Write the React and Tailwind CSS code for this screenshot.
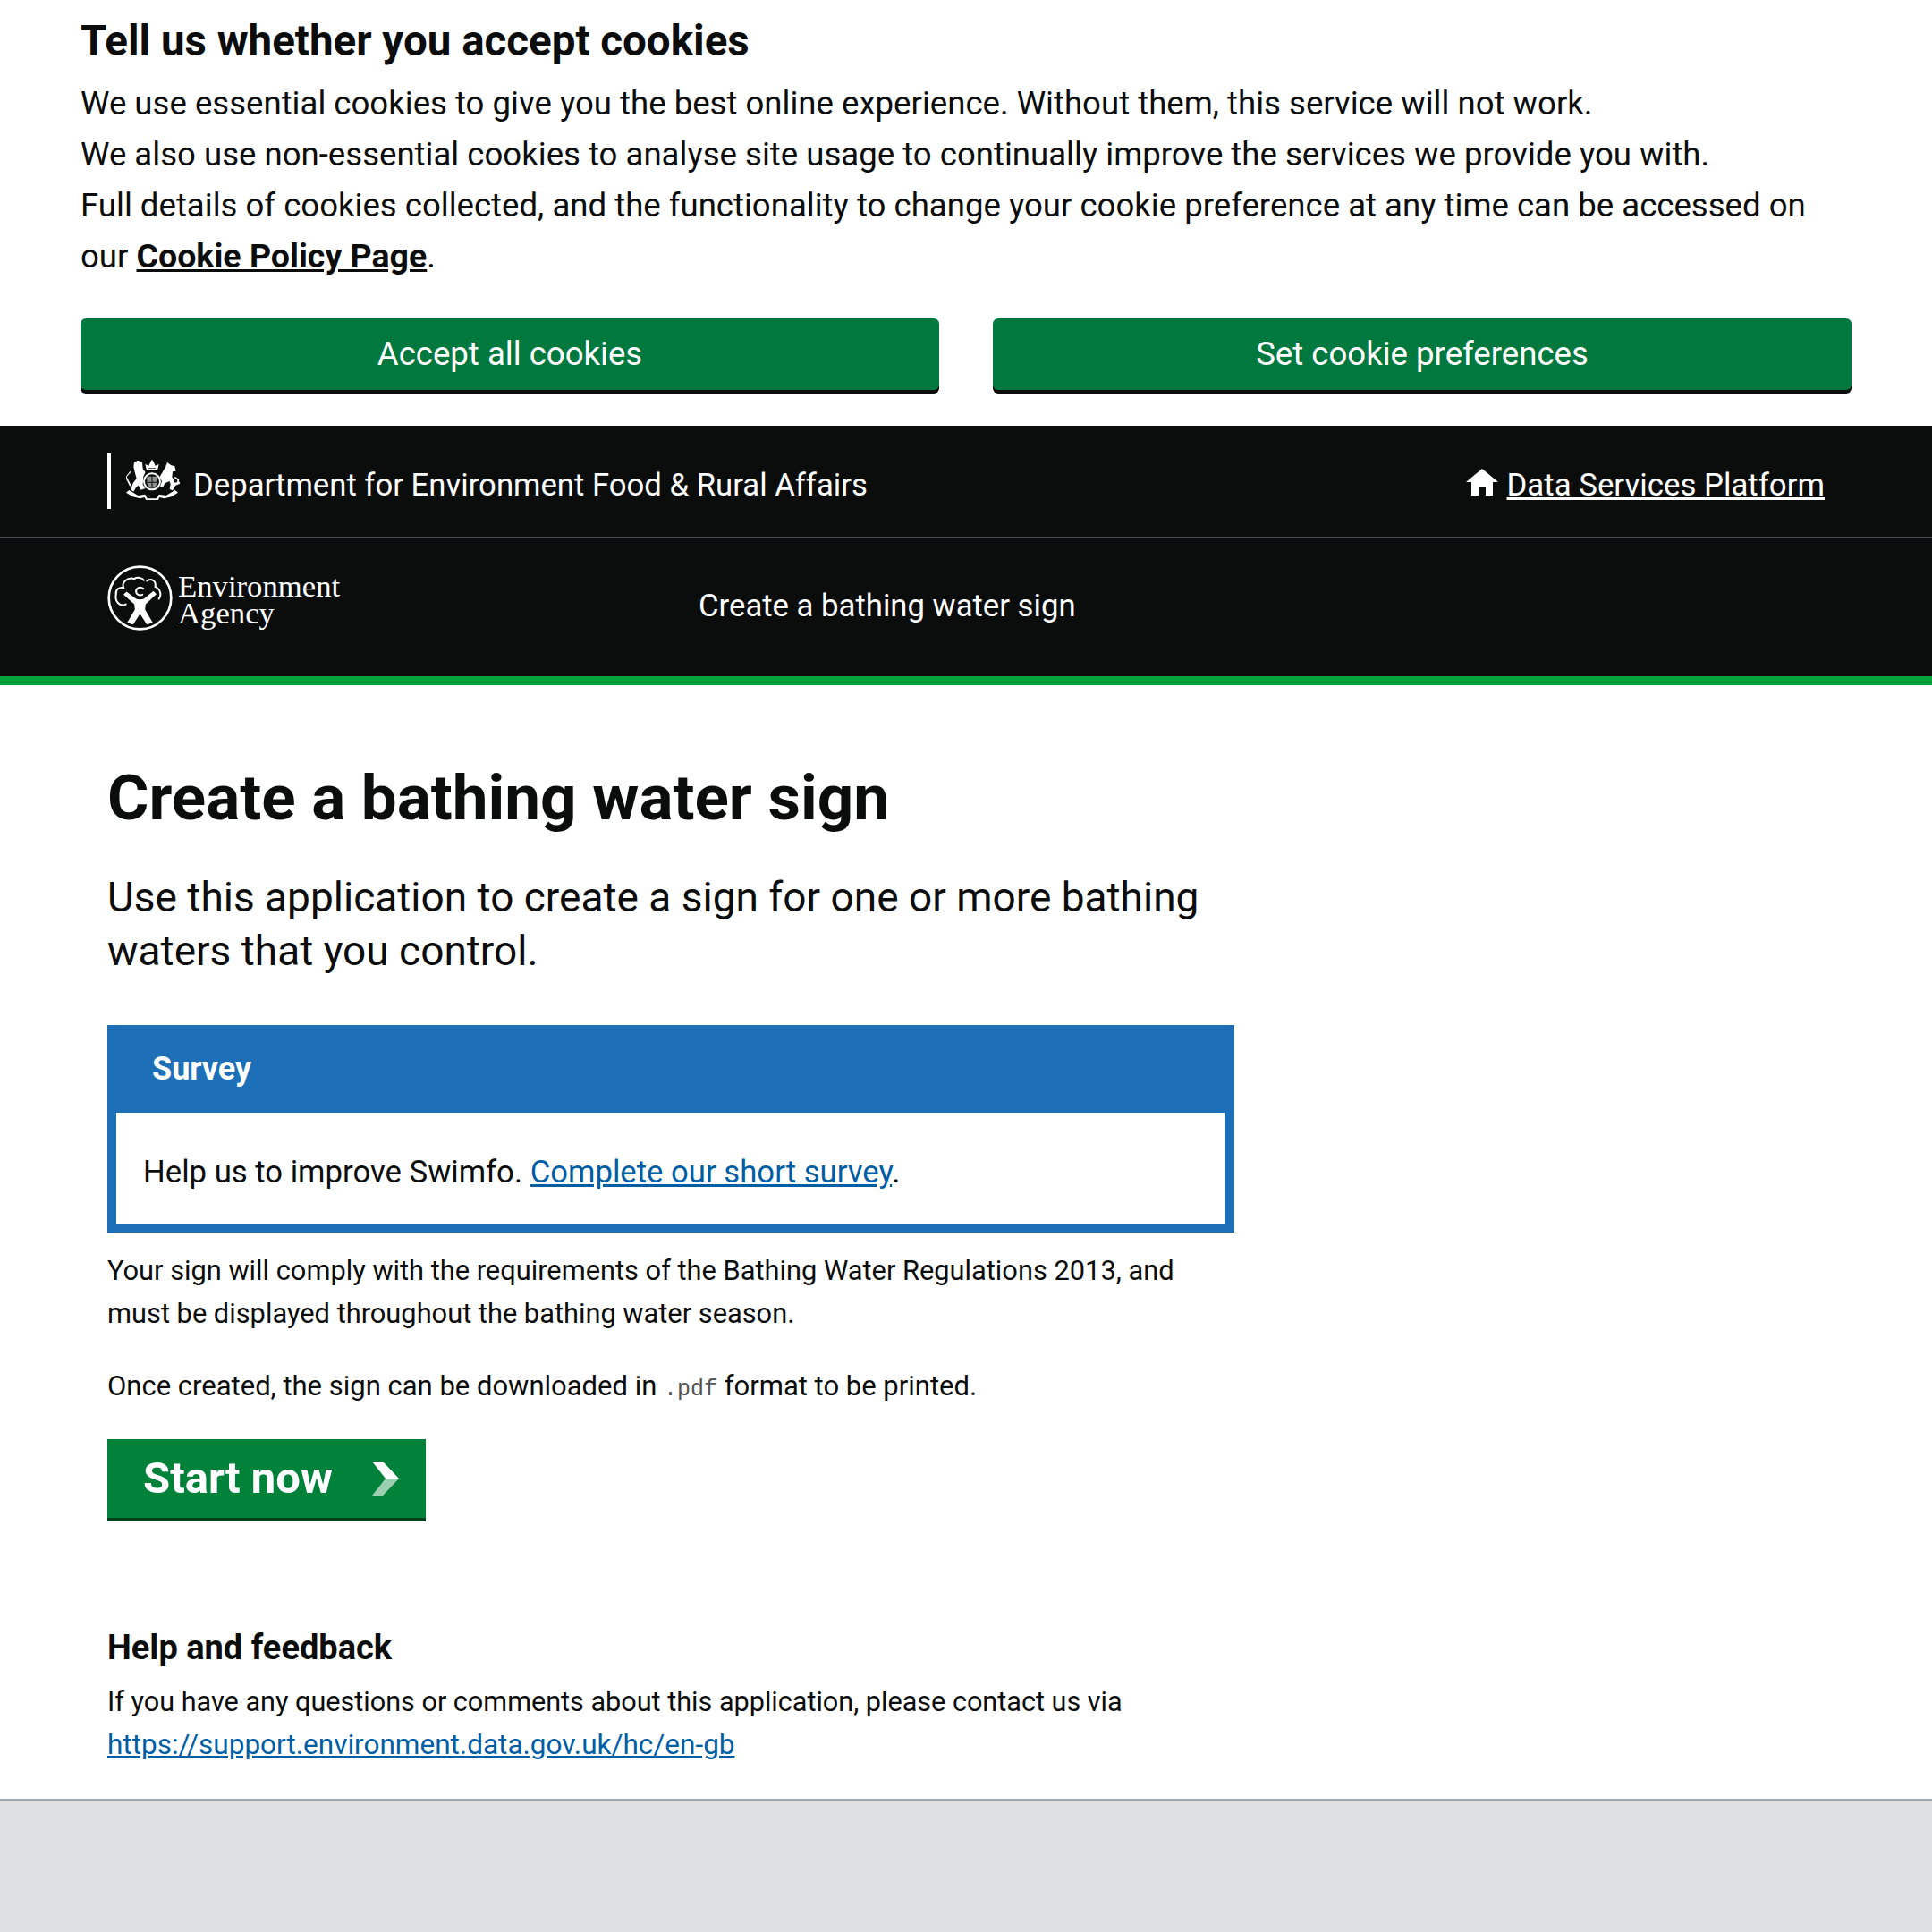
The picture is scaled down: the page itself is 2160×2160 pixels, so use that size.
import React from 'react';

function Crest() {
    return (
        <svg width="62" height="47" viewBox="28 22 186 141" fill="#fff" className="block mb-[6px]">
            {/* crown */}
            <path d="M97 63L92 43l12 5 6-13 5-8 5 8 6 13 12-5-5 20z" />
            <path d="M103 56h24v2h-24z" fill="#0b0c0c" />
            {/* shield */}
            <circle cx="115" cy="101" r="27" fill="#0b0c0c" stroke="#fff" strokeWidth="6" />
            <path d="M98 84h34v20q0 14-17 21q-17-7-17-21z" fill="#8f8f8f" />
            <path d="M113.500 84h3v41h-3zM98 102h34v3H98z" fill="#0b0c0c" />
            {/* lion */}
            <path d="M55 36l13-6 14 8 2 20 9 12-7 14-2 28 9 12-15 5-9-15-8 7-8 14-10-7 8-21 12-16-6-22-4-18z" />
            <path d="M44 70L30 85l14 27-3 6-16-31 17-21z" />
            {/* unicorn */}
            <path d="M155 28l23 18 13 4 4 16-11 2-2 18 10 19 14-4 3 7-15 6-10 17-10-4 3-18-4-9-15 7-6 12-10-2 6-17-8-14 10-16 10-18 6-14z" />
            <path d="M192 84l14 10-3 12-4-2 1-8-10-7z" />
            {/* motto */}
            <path d="M38 130l30 18 24-4 7 14h32l7-14 24 4 30-18 10 8-22 14-24 6-16-4-5 10h-40l-5-10-16 4-24-6-22-14z" />
        </svg>
    );
}

function EaLogo() {
    return (
        <svg width="73" height="73" viewBox="18 20 218 218" fill="none" stroke="#fff" className="block shrink-0">
            <circle cx="127" cy="129" r="104" strokeWidth="8" />
            {/* tree canopy */}
            <path d="M80 150C60 160 42 140 47 118C45 100 58 92 72 95C65 78 85 58 108 65C118 58 135 62 140 70" strokeWidth="6" strokeLinecap="round" />
            <path d="M150 72C165 62 182 72 178 92C195 98 200 120 190 132" strokeWidth="6" strokeLinecap="round" />
            {/* head */}
            <path d="M138 98C125 88 110 100 115 112C118 120 128 122 135 118" strokeWidth="6" strokeLinecap="round" />
            {/* figure */}
            <path d="M72 118l10-10 32 24q13 4 26 0l32-26 10 10-36 34-2 18 26 44-20 6-23-36-23 36-20-6 26-44-2-18z" fill="#fff" stroke="none" />
        </svg>
    );
}

function HomeIcon() {
    return (
        <svg width="36" height="30" viewBox="0 0 36 30" fill="#fff" className="block mt-[2px]">
            <path d="M18 0L36 15h-6v15h-8V20h-8v10H6V15H0z" />
        </svg>
    );
}

function ChevronIcon() {
    return (
        <svg width="30" height="38" viewBox="0 0 30 38" className="block">
            <path d="M0 0h12l18 19H15z" fill="#fff" />
            <path d="M15 19h15L12 38H0z" fill="#9ccfb1" />
        </svg>
    );
}

function App() {
    return (
        <div className="min-h-screen flex flex-col bg-white text-[#0b0c0c] font-['Roboto','Liberation_Sans',sans-serif]">
            <div className="px-[90px] pt-[20px] h-[476px]">
                <h2 className="text-[47.500px] leading-[52px] font-bold">Tell us whether you accept cookies</h2>
                <div className="mt-[15px] text-[36.600px] leading-[57px] w-[1980px]">
                    <p>We use essential cookies to give you the best online experience. Without them, this service will not work.</p>
                    <p>We also use non-essential cookies to analyse site usage to continually improve the services we provide you with.</p>
                    <p>Full details of cookies collected, and the functionality to change your cookie preference at any time can be accessed on our <a className="font-bold underline text-[37.500px]">Cookie Policy Page</a>.</p>
                </div>
                <div className="mt-[41px] flex gap-[60px]">
                    <button className="flex-1 h-[80px] rounded-[6px] bg-[#00783e] shadow-[0_4px_0_#0b0c0c] text-white text-[36.600px]">Accept all cookies</button>
                    <button className="flex-1 h-[80px] rounded-[6px] bg-[#00783e] shadow-[0_4px_0_#0b0c0c] text-white text-[36.600px]">Set cookie preferences</button>
                </div>
            </div>

            <header className="bg-[#0b0c0c] text-white border-b-[10px] border-[#00a33b]">
                <div className="h-[126px] px-[120px] flex items-center justify-between border-b-2 border-[#4c4f51]">
                    <div className="flex items-center h-[62px] border-l-4 border-white pl-[17px] gap-[13px] text-[34.700px]">
                        <Crest />
                        <span className="pt-[8px]">Department for Environment Food &amp; Rural Affairs</span>
                    </div>
                    <div className="flex items-center gap-[10px] text-[34.800px]">
                        <HomeIcon />
                        <a className="underline pt-[8px]">Data Services Platform</a>
                    </div>
                </div>
                <div className="h-[154px] px-[120px] pt-[30px] flex items-start">
                    <div className="flex items-center gap-[6px] w-[661px]">
                        <EaLogo />
                        <div className="font-['Liberation_Serif',serif] text-[34.700px] leading-[30px] pt-[4px]">
                            <div>Environment</div>
                            <div>Agency</div>
                        </div>
                    </div>
                    <div className="text-[34.700px] leading-[44px] mt-[23px]">Create a bathing water sign</div>
                </div>
            </header>

            <main className="px-[120px] pt-[86px] pb-[36px] w-[1400px]">
                <h1 className="text-[71px] leading-[80px] font-bold">Create a bathing water sign</h1>
                <p className="mt-[41px] text-[46px] leading-[60px] w-[1260px]">Use this application to create a sign for one or more bathing waters that you control.</p>

                <section className="mt-[53px] w-[1260px] border-[10px] border-[#1d70b8]">
                    <div className="bg-[#1d70b8] h-[88px] pl-[40px] pb-[10px] flex items-center text-white text-[36px] font-bold">Survey</div>
                    <div className="h-[124px] pl-[30px] pt-[8px] flex items-center text-[34.700px]">
                        <p>Help us to improve Swimfo. <a className="text-[#005ea5] underline">Complete our short survey</a>.</p>
                    </div>
                </section>

                <p className="mt-[19px] text-[30.800px] leading-[48px] w-[1240px]">Your sign will comply with the requirements of the Bathing Water Regulations 2013, and must be displayed throughout the bathing water season.</p>
                <p className="mt-[33px] text-[31px] leading-[48px]">Once created, the sign can be downloaded in <code className="font-['Liberation_Mono',monospace] text-[25px] text-[#555]">.pdf</code> format to be printed.</p>

                <a className="mt-[31px] w-[356px] h-[92px] pl-[40px] pr-[30px] flex items-center justify-between bg-[#00823b] border-b-4 border-[#00401c] text-white text-[49px] font-bold">
                    <span>Start now</span>
                    <ChevronIcon />
                </a>

                <h2 className="mt-[117px] text-[38px] leading-[48px] font-bold">Help and feedback</h2>
                <p className="mt-[13px] text-[30.600px] leading-[48px]">If you have any questions or comments about this application, please contact us via <a className="text-[#005ea5] underline block text-[31.500px]">https://support.environment.data.gov.uk/hc/en-gb</a></p>
            </main>

            <footer className="flex-1 bg-[#dee0e2] border-t-2 border-[#a1acb2]"></footer>
        </div>
    );
}

export default App;
